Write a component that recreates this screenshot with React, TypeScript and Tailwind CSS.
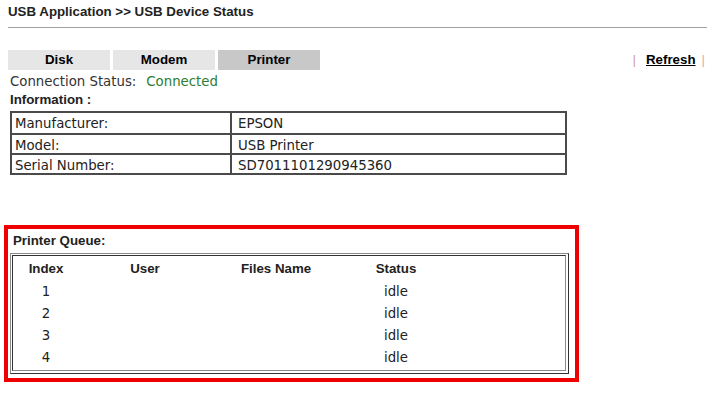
import React from "react";

const tahoma = "font-['DejaVu_Sans',sans-serif]";
const arial = "font-['Liberation_Sans',Arial,sans-serif]";

export default function App() {
  const info = [
    ["Manufacturer:", "EPSON"],
    ["Model:", "USB Printer"],
    ["Serial Number:", "SD7011101290945360"],
  ];
  const queue = [1, 2, 3, 4];
  return (
    <div className={`w-[727px] h-[401px] bg-white text-black ${arial}`}>
      <div className="h-[27px] pl-2 pt-[4px] text-[13.3px] leading-[16px] font-bold text-[#222]">
        USB Application &gt;&gt; USB Device Status
      </div>
      <div className="ml-2 w-[699px] h-px bg-[#a0a0a0]" />
      <div className="mt-[22px] h-[20px] flex items-center pl-2 pr-[22px]">
        <div className="flex gap-[3px]">
          <div className="w-[102px] h-[20px] bg-[#e6e6e6] text-center text-[13.3px] leading-[20px] font-bold">Disk</div>
          <div className="w-[102px] h-[20px] bg-[#e6e6e6] text-center text-[13.3px] leading-[20px] font-bold">Modem</div>
          <div className="w-[102px] h-[20px] bg-[#c8c8c8] text-center text-[13.3px] leading-[20px] font-bold">Printer</div>
        </div>
        <div className="ml-auto flex items-center text-[13.3px] font-bold">
          <span className="text-[#d99a9a] font-normal">|</span>
          <span className="ml-[10px] underline">Refresh</span>
          <span className="ml-[6px] text-[#e8a8a8] font-normal">|</span>
        </div>
      </div>
      <div className={`h-[20px] pl-[10px] pt-[3px] flex items-center text-[13.3px] text-[#333] ${tahoma}`}>
        <span>Connection Status:</span>
        <span className="ml-[10px] text-[#2e7d32]">Connected</span>
      </div>
      <div className="h-[21px] pl-[10px] pb-[1px] flex items-center text-[13.3px] font-bold text-[#222]">Information :</div>
      <div className={`ml-[10px] w-[557px] border-2 border-[#4a4a4a] ${tahoma} text-[13.3px] text-[#222]`}>
        {info.map(([k, v], i) => (
          <div key={k} className={`flex h-[20px] ${i > 0 ? "border-t-2 border-[#4a4a4a]" : ""}`}>
            <div className="w-[220px] pl-[3px] leading-[20px] border-r-2 border-[#4a4a4a]">
              <span className="relative top-[1px]">{k}</span>
            </div>
            <div className="flex-1 pl-[6px] leading-[20px]">
              <span className="relative top-[1px]">{v}</span>
            </div>
          </div>
        ))}
      </div>
      <div className="mt-[50px] ml-[4px] w-[575px] h-[157px] border-4 border-[#ee0000]">
        <div className="h-[24px] pl-[5px] flex items-center text-[13.3px] font-bold text-[#222]">Printer Queue:</div>
        <div className="ml-[2px] w-[559px] h-[121px] border border-t-[#8a8a8a] border-l-[#8a8a8a] border-r-[#333] border-b-[#333] p-[1px] pr-[2px] pb-[2px]">
          <div className="h-full border border-t-[#333] border-l-[#333] border-r-[#8a8a8a] border-b-[#8a8a8a] pt-[2px]">
            <div className="grid grid-cols-[66px_132px_130px_110px] text-[13.3px] text-[#222]">
              <div className="h-[22px] leading-[22px] text-center font-bold">Index</div>
              <div className="h-[22px] leading-[22px] text-center font-bold">User</div>
              <div className="h-[22px] leading-[22px] text-center font-bold">Files Name</div>
              <div className="h-[22px] leading-[22px] text-center font-bold">Status</div>
              {queue.map((n) => (
                <React.Fragment key={n}>
                  <div className={`h-[22px] leading-[22px] text-center ${tahoma}`}>
                    <span className="relative top-[1px]">{n}</span>
                  </div>
                  <div className="h-[22px]" />
                  <div className="h-[22px]" />
                  <div className={`h-[22px] leading-[22px] text-center ${tahoma}`}>
                    <span className="relative top-[1px]">idle</span>
                  </div>
                </React.Fragment>
              ))}
            </div>
          </div>
        </div>
      </div>
    </div>
  );
}
